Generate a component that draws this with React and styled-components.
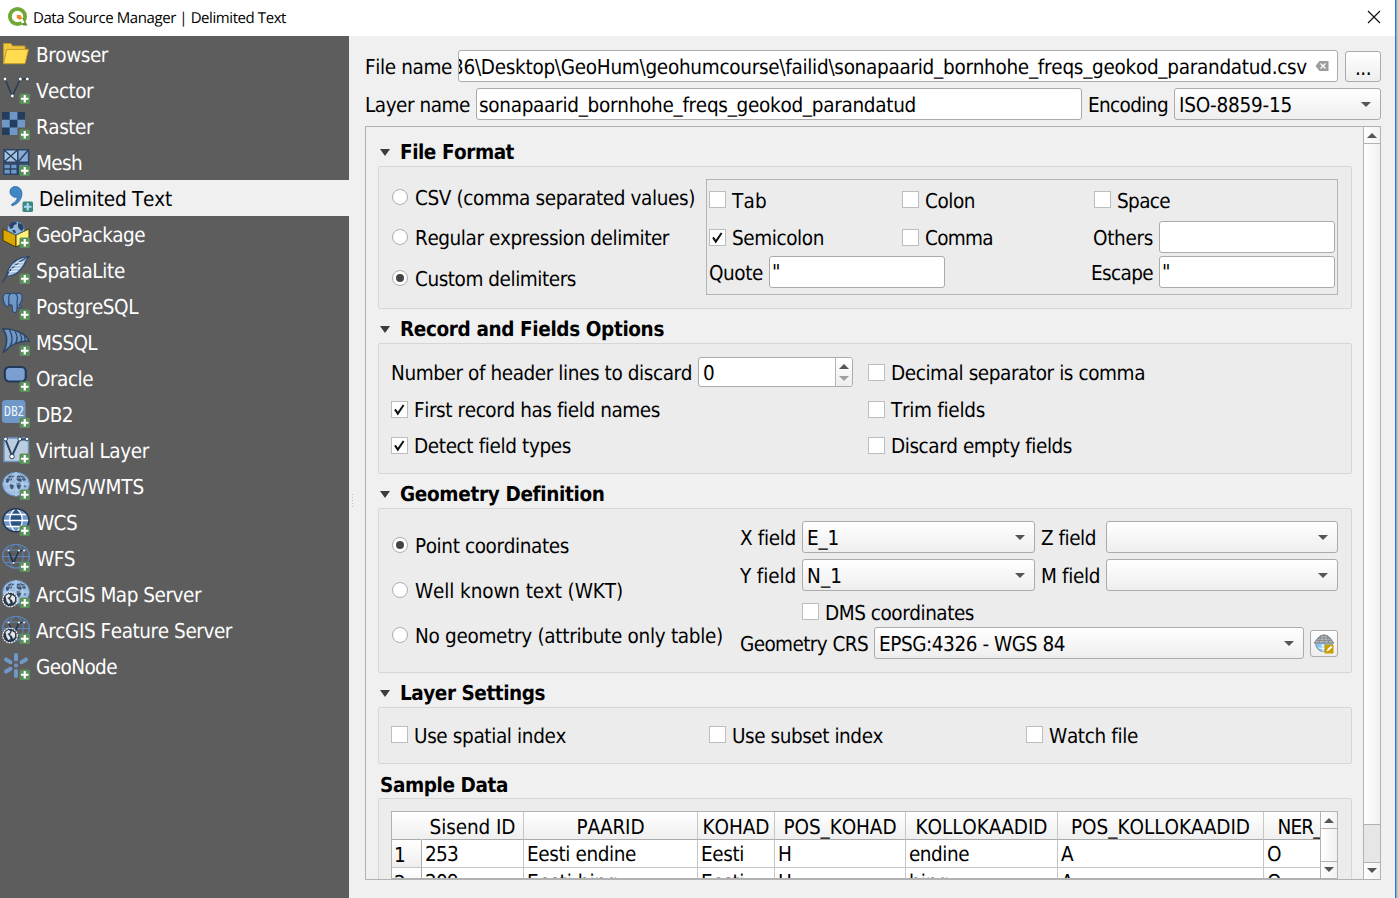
import React, { useLayoutEffect, useRef, useState } from "react";
import styled, { createGlobalStyle } from "styled-components";

const Global = createGlobalStyle`
  * { box-sizing: border-box; }
  html, body, #root { height: 100%; margin: 0; }
  body {
    overflow: hidden;
    background: #f0f0f0;
    color: #000;
    font-family: "DejaVu Sans Condensed", "DejaVu Sans", sans-serif;
    font-stretch: condensed;
    font-size: 20.5px;
    line-height: 24px;
    text-rendering: geometricPrecision;
    font-kerning: none;
  }
`;

/* ---------- text ---------- */
const TextSpan = styled.span`
  display: block;
  flex: none;
  white-space: pre;
  width: ${(p) => p.$w}px;
  font-weight: ${(p) => (p.$bold ? 700 : 400)};
  margin-top: ${(p) => p.$drop ?? 1}px;
`;

/* Label whose tracking is tuned so that it spans a given width. */
function Label({ w, bold, drop, children }) {
  const ref = useRef(null);
  const [spacing, setSpacing] = useState(0);
  useLayoutEffect(() => {
    const range = document.createRange();
    range.selectNodeContents(ref.current);
    const natural = range.getBoundingClientRect().width;
    setSpacing((w - natural) / String(children).length);
  }, [w, children]);
  return (
    <TextSpan ref={ref} $w={w} $bold={bold} $drop={drop} style={{ letterSpacing: spacing }}>
      {children}
    </TextSpan>
  );
}

/* ---------- window ---------- */
const Window = styled.div`
  display: flex;
  width: 1399px;
  height: 898px;
  overflow: hidden;
`;
const Main = styled.div`
  width: 1395px;
  display: flex;
  flex-direction: column;
`;
const Backdrop = styled.div`
  width: 4px;
  border-left: 1px solid #1a7fd4;
  background: linear-gradient(90deg, #a9a9a9 0 1px, #c4c4c4 1px 2px, #d2d2d2 2px);
`;
const TitleBar = styled.header`
  height: 36px;
  background: #fff;
  display: flex;
  align-items: center;
  padding: 0 14px 2px 7px;
  font: 15px "Open Sans", "Noto Sans", sans-serif;
  & > svg:last-child { margin-left: auto; }
`;
const TitleText = styled.div`
  margin: 1px 0 0 5px;
`;
const Body = styled.div`
  display: flex;
  flex: 1;
  min-height: 0;
`;

/* ---------- side bar ---------- */
const Sidebar = styled.nav`
  width: 349px;
  background: #5d5d5d;
`;
const NavItem = styled.div`
  height: 36px;
  display: flex;
  align-items: center;
  gap: 6px;
  padding-left: ${(p) => (p.$active ? 5 : 2)}px;
  background: ${(p) => (p.$active ? "#f0f0f0" : "transparent")};
  color: ${(p) => (p.$active ? "#000" : "#fff")};
`;
const NavIcon = styled.svg`
  width: 28px;
  height: 28px;
  flex: none;
`;
const Splitter = styled.div`
  width: 8px;
  display: flex;
  align-items: center;
  padding: 68px 0 0 3px;
  &::before {
    content: "";
    width: 1px;
    height: 15px;
    background: repeating-linear-gradient(#bdbdbd 0 1px, transparent 1px 3px);
  }
`;

/* ---------- form controls ---------- */
const Content = styled.main`
  flex: 1;
  min-width: 0;
  padding: 14px 14px 18px 8px;
  display: flex;
  flex-direction: column;
  gap: 6px;
`;
const Row = styled.div`
  display: flex;
  flex: none;
  align-items: center;
  gap: ${(p) => p.$gap ?? 6}px;
  height: ${(p) => (p.$h ? p.$h + "px" : "auto")};
`;
const Field = styled.div`
  height: 32px;
  width: ${(p) => (p.$w ? p.$w + "px" : "auto")};
  flex: ${(p) => (p.$w ? "none" : 1)};
  display: flex;
  align-items: center;
  padding-left: 2px;
  background: #fff;
  border: 1px solid #ababab;
  border-radius: 3px;
`;
const ClipEnd = styled.div`
  flex: 1;
  min-width: 0;
  margin-left: -2px;
  overflow: hidden;
  display: flex;
  justify-content: flex-end;
`;
const Combo = styled(Field)`
  padding: 0 9px 0 4px;
  justify-content: space-between;
  background: linear-gradient(#fff, #eee);
`;
const PushButton = styled.button`
  width: ${(p) => p.$w}px;
  height: ${(p) => p.$h}px;
  padding: 0;
  display: flex;
  align-items: center;
  justify-content: center;
  font: inherit;
  font-stretch: condensed;
  color: #000;
  background: linear-gradient(#fff, #eee);
  border: 1px solid #ababab;
  border-radius: 3px;
`;
const CheckBox = styled.span`
  width: 17px;
  height: 17px;
  flex: none;
  display: flex;
  align-items: center;
  justify-content: center;
  background: #fff;
  border: 1px solid #bdbdbd;
`;
const RadioDot = styled.span`
  width: 16px;
  height: 16px;
  flex: none;
  display: flex;
  align-items: center;
  justify-content: center;
  background: #fff;
  border: 1px solid #adadad;
  border-radius: 50%;
  &::before {
    content: "";
    width: 8px;
    height: 8px;
    border-radius: 50%;
    background: ${(p) => (p.$on ? "#444" : "transparent")};
  }
`;
const SpinButtons = styled.div`
  width: 17px;
  height: 28px;
  margin-left: auto;
  border-left: 1px solid #b5b5b5;
  background: linear-gradient(#fff, #eee);
  border-radius: 0 2px 2px 0;
  display: flex;
  flex-direction: column;
  align-items: center;
  justify-content: center;
  gap: 7px;
`;
const Triangle = styled.i`
  width: 0;
  height: 0;
  flex: none;
  border: 0 solid transparent;
  border-width: 0 ${(p) => p.$s ?? 5}px;
  border-${(p) => (p.$up ? "bottom" : "top")}: ${(p) => p.$t ?? 5}px solid ${(p) => p.$c ?? "#555"};
`;

/* ---------- scroll area ---------- */
const ScrollArea = styled.div`
  flex: 1;
  min-height: 0;
  display: flex;
  border: 1px solid #b2b2b2;
`;
const Viewport = styled.div`
  flex: 1;
  min-width: 0;
  overflow: hidden;
  padding: 11px 11px 0 12px;
`;
const ScrollBar = styled.div`
  width: ${(p) => p.$w}px;
  flex: none;
  border-left: 1px solid #b2b2b2;
  background: #e6e6e6;
  display: flex;
  flex-direction: column;
`;
const ScrollButton = styled.div`
  height: 16px;
  display: flex;
  align-items: center;
  justify-content: center;
  background: linear-gradient(90deg, #fff, #f2f2f2);
`;
const Thumb = styled.div`
  height: ${(p) => p.$h}px;
  margin-bottom: ${(p) => p.$after ?? 0}px;
  border-top: 1px solid #b2b2b2;
  border-bottom: 1px solid #b2b2b2;
  background: linear-gradient(90deg, #fff, #f0f0f0);
`;
const ScrollEnd = styled(ScrollButton)`
  flex: 1;
  padding-bottom: 1px;
  border-top: ${(p) => (p.$line ? "1px solid #b2b2b2" : "0")};
`;

/* ---------- group boxes ---------- */
const GroupTitle = styled.div`
  height: 28px;
  display: flex;
  align-items: center;
  padding-left: 2px;
  gap: 10px;
`;
const GroupBox = styled.section`
  height: ${(p) => p.$h}px;
  margin-bottom: 6px;
  background: #ececec;
  border: 1px solid #d6d6d6;
  border-radius: 2px;
  display: flex;
  padding: ${(p) => p.$pad};
`;
const Column = styled.div`
  width: ${(p) => p.$w}px;
  flex: none;
`;
const GroupRadios = styled.div`
  padding: 10px 0 0 13px;
`;
const DelimiterFrame = styled.div`
  width: 632px;
  height: 116px;
  margin-top: 12px;
  border: 1px solid #b4b4b4;
  display: grid;
  grid-template-columns: 193px 186px 247px;
  grid-template-rows: 39px 36px 34px;
  align-items: center;
  padding-left: 2px;
`;
const EndCell = styled.div`
  display: flex;
  align-items: center;
  justify-content: flex-end;
  gap: 6px;
`;
const SpaceCell = styled.div`
  padding-left: 6px;
`;
const SpinField = styled(Field)`
  height: 30px;
  padding-left: 4px;
`;
const DmsRow = styled.div`
  height: 30px;
  display: flex;
  align-items: center;
  padding: 0 0 1px 62px;
`;
const Rows = styled.div`
  display: flex;
  flex-direction: column;
`;
const SettingCell = styled.div`
  width: ${(p) => p.$w}px;
  display: flex;
  align-items: center;
`;

/* ---------- sample table ---------- */
const TableFrame = styled.div`
  width: 947px;
  height: 68px;
  border: 1px solid #b2b2b2;
  display: flex;
  background: #fff;
`;
const Table = styled.div`
  flex: 1;
  min-width: 0;
  height: 66px;
  overflow: hidden;
  display: grid;
  grid-template-columns: 30px 102px 174px 77px 131px 152px 206px 72px;
  grid-template-rows: 28px 28px 28px;
`;
const HeadCell = styled.div`
  display: flex;
  align-items: center;
  justify-content: center;
  background: linear-gradient(#fff, #efefef);
  border-right: 1px solid ${(p) => (p.$plain ? "transparent" : "#c6c6c6")};
  border-bottom: 1px solid #ababab;
`;
const RowHead = styled.div`
  display: flex;
  align-items: center;
  padding-left: 2px;
  background: linear-gradient(#fff, #efefef);
  border-right: 1px solid #ababab;
  border-bottom: 1px solid #c6c6c6;
`;
const Cell = styled.div`
  display: flex;
  align-items: center;
  padding-left: 3px;
  border-right: 1px solid #c6c6c6;
  border-bottom: 1px solid #c6c6c6;
`;

/* ---------- composed controls ---------- */
const Check = ({ on, w, children }) => (
  <Row $gap={6}>
    <CheckBox>
      {on && (
        <svg width="15" height="15" viewBox="0 0 15 15">
          <path d="M3 7.4 L5.8 11.6 L11.6 3" fill="none" stroke="#111" strokeWidth="2" />
        </svg>
      )}
    </CheckBox>
    <Label w={w} drop={2}>{children}</Label>
  </Row>
);
const Radio = ({ on, w, h, drop = 1, children }) => (
  <Row $gap={7} $h={h}>
    <RadioDot $on={on} />
    <Label w={w} drop={drop}>{children}</Label>
  </Row>
);
const Select = ({ w, text, textWidth }) => (
  <Combo $w={w}>
    {text ? <Label w={textWidth}>{text}</Label> : <span />}
    <Triangle />
  </Combo>
);
const Title = ({ w, children }) => (
  <GroupTitle>
    <Triangle $s={5.5} $t={7} $c="#3c3c3c" />
    <Label w={w} bold drop={-1}>{children}</Label>
  </GroupTitle>
);

/* ---------- icons ---------- */
const N = "#2b4464";
const B = "#6f98c8";
const Plus = ({ fill = "#5a8f5b", stroke = "#fff" }) => (
  <g>
    <rect x="17.5" y="17.5" width="10.5" height="10.5" rx="1.5" fill={fill} />
    <path d="M22.75 19v7.5M19 22.75h7.5" stroke={stroke} strokeWidth="2.2" />
  </g>
);
const Continents = () => (
  <path
    d="M4 7l3-3 4-1 1 2-2 1 0 2-3 1-1 2-2-1zM7 12l3 0 2 2-2 4-2-2zM15 4l3-1 5 2 1 3-2 1-2-1-1 2-3-1-2-2zM14 11l4 0 1 3-2 4-2-3zM22 13l2 1-1 2z"
    fill={N}
    opacity=".85"
  />
);
const Globe = () => (
  <g>
    <ellipse cx="14" cy="12.2" rx="13.5" ry="12" fill="#9bbce0" stroke="#5d87bb" />
    <Continents />
    <path d="M1 12h26M3 6h22M3 18h22M14 0v24M14 0C5 7 5 17 14 24C23 17 23 7 14 0" fill="none" stroke="#c9dcf0" strokeWidth=".6" />
  </g>
);
const Wire = () => (
  <g fill="none">
    <ellipse cx="14" cy="12.2" rx="13.3" ry="11.8" stroke="#5c86bd" strokeWidth="1.3" />
    <path d="M1 12.5h26M3 6h22M3 18.5h18M12 .5C5 7 5 17 12 24M16 .5C23 7 23 17 16 24" stroke="#5c86bd" strokeWidth="1" />
    <path d="M6.5 6.5L11.5 19L17 6.5H22" stroke="#24364d" strokeWidth="1.7" />
    <g fill="#e8eef6">
      <circle cx="6.5" cy="6.5" r="1.1" /><circle cx="11.5" cy="19" r="1.1" />
      <circle cx="17" cy="6.5" r="1.1" /><circle cx="22" cy="6.5" r="1.1" />
    </g>
  </g>
);
const Arc = () => (
  <g>
    <circle cx="8" cy="19.5" r="7.2" fill="#26384d" stroke="#eee" strokeWidth="1.3" strokeDasharray="2 .7" />
    <path d="M3.5 16l3-2 2 1-1 2-2 1 2 2 1 3-2 1-2-3zM10 15l3 2 0 4-2 2-1-3-2-1z" fill="#e8e8e8" />
  </g>
);
const icons = {
  folder: (
    <g stroke="#c19a25" strokeWidth="1">
      <path d="M1.5 24V3.5h7.5l1.5 2.5h12.5v5" fill="#f0c63c" />
      <path d="M4.5 9.5l22-.2-3.5 14.4H1.5z" fill="#ffdc50" />
    </g>
  ),
  vector: (
    <g>
      <path d="M3 3L10.3 20L18.3 3H25.3" fill="none" stroke="#2c3e52" strokeWidth="1.6" />
      <g fill="#fff" stroke="#2c3e52" strokeWidth=".8">
        <circle cx="3" cy="3" r="1.9" /><circle cx="10.3" cy="20" r="1.9" />
        <circle cx="18.3" cy="3" r="1.9" /><circle cx="25.3" cy="3" r="1.9" />
      </g>
      <Plus />
    </g>
  ),
  raster: (
    <g>
      <path d="M0 0h23v15.4H15.4V23H0z" fill={B} />
      <path d="M0 0h7.7v7.7H0zM15.4 0H23v7.7h-7.6zM7.7 7.7h7.7v7.7H7.7zM0 15.4h7.7V23H0z" fill="#253d5d" />
      <Plus />
    </g>
  ),
  mesh: (
    <g>
      <g fill="#a6c3e3" stroke={N} strokeWidth="1.5">
        <path d="M1.8 1.8h14v12.4H1.8zM1.8 1.8l14 12.4M15.8 1.8L1.8 14.2" />
        <path d="M15.8 1.8h10.8v12.4H15.8z" fill="#86abd6" />
        <path d="M26.6 1.8L15.8 14.2" />
        <path d="M1.8 16h13.4v10.2H1.8zM1.8 21h13.4M8.5 16v10" fill={B} />
        <path d="M16.5 16h10v10.2h-10z" fill={B} />
      </g>
      <Plus />
    </g>
  ),
  comma: (
    <g>
      <path
        d="M5 7.2C5.2 4 8.1 2.3 10.8 2.6C15.2 3 17.7 7 16.7 11.8C15.6 17 12 20.5 7.5 21.6C6.4 21.8 6 20.6 7 20C10.2 18.2 12.2 16 12.5 13C9 14.3 4.7 11.3 5 7.2z"
        fill="#4187c6" stroke="#2c66a0" strokeWidth=".8"
      />
      <Plus fill="#3e8580" stroke="#a8dcf5" />
    </g>
  ),
  geopackage: (
    <g>
      <path d="M1 9l13 6v12L1 20.5z" fill="#dba800" stroke="#4a3a00" />
      <path d="M14 15l13-6v11l-13 7z" fill="#fff27a" stroke="#4a3a00" />
      <path d="M5 10.5A9 9 0 1 1 23 10.5L14 15z" fill="#93b6db" stroke="#47698f" />
      <path d="M7 5l3-3 4 0 1 2-3 1-1 3-3 1zM16 3l4 1 2 4-2 3-2-1-2-3zM10 10l3 0 1 3-2 0z" fill={N} />
      <Plus />
    </g>
  ),
  feather: (
    <g>
      <path d="M27 .5C18 1 11 5 7 12C5.5 15 5 18 4.5 20.5C12 20 18 16 22 9C23 6 25 3 27 .5z" fill="#a3c2e4" stroke={N} strokeWidth="1.2" />
      <path d="M0 27L5.5 18C10 11 18 5 27 .5" fill="none" stroke={N} strokeWidth="1.3" />
      <path d="M7 16l9-1M9 13l9-1M11 10l9-1M14 7l8-1" stroke="#e8f0f8" strokeWidth="1" />
      <Plus />
    </g>
  ),
  elephant: (
    <g>
      <g fill={B} stroke="#2d4d74" strokeWidth="1.2" strokeLinejoin="round">
        <path d="M4 1.5C1 2 .5 5 1.5 9C2.2 12 4 15 5.5 14.5C6.5 14 7 13 7 12L8 2C6.500 1.2 5 1.2 4 1.5z" />
        <path d="M14 1.5C17 .5 20 1.5 20.2 4.5C20.3 8 18.5 11.5 17 13.5L20 14.5C19 16 16.5 16 15.5 15L14 10z" />
        <path d="M7.5 2.5C9.500 .5 13 .8 14.8 2.8C16 5 15.5 8 15 10C15 13 15.5 17 14.5 19.5C13.5 21.2 10.8 21 10.5 18.5L10 13C7.5 13.5 6.5 12 7 10C6.5 7 6.5 4.5 7.5 2.5z" />
      </g>
      <Plus />
    </g>
  ),
  mssql: (
    <g>
      <path d="M.8 .8C12 1 24 5 27 13C18 12.5 8 17 .8 25C6 16 6 8 .8 .8z" fill={B} stroke={N} strokeWidth="1.5" />
      <path d="M7.500 2C11 8 10.5 14 8 18.5M13 3.5C16 8 15.5 12 13.5 16M18 5.5C20 8.5 20 11 18.8 14M22.5 8c1 2 1 3 .5 5" fill="none" stroke={N} strokeWidth="1.3" />
      <Plus />
    </g>
  ),
  oracle: (
    <g>
      <rect x="2.800" y="3" width="21" height="14.500" rx="4.500" fill="#7b9fd0" stroke="#22395a" strokeWidth="2.200" />
      <Plus />
    </g>
  ),
  db2: (
    <g>
      <rect x="0" y="0" width="23.500" height="23" rx="3.500" fill={B} />
      <text x="11.700" y="16.2" fontSize="14" textLength="20" lengthAdjust="spacingAndGlyphs" textAnchor="middle" fill="#f2f6fa" fontFamily="Open Sans">DB2</text>
      <Plus />
    </g>
  ),
  virtual: (
    <g>
      <rect x="2" y="2" width="24.500" height="23.500" fill="#bccde0" stroke="#6d94c0" strokeWidth="1.500" />
      <path d="M3.500 3.500L10 20L17.500 3.500H25" fill="none" stroke={N} strokeWidth="2" />
      <g fill="#fff" stroke={N} strokeWidth="1">
        <circle cx="3.500" cy="3" r="1.900" /><circle cx="10" cy="20.500" r="2.300" />
        <circle cx="17.800" cy="3" r="1.900" /><circle cx="25" cy="3" r="1.900" />
      </g>
      <Plus />
    </g>
  ),
  wms: <g><Globe /><Plus /></g>,
  wcs: (
    <g>
      <ellipse cx="14" cy="12.200" rx="13" ry="11.500" fill={B} />
      <path d="M8.500 6.500h11l1 6h-13zM7.500 12.500h13l-1 6h-11z" fill="#2d5283" />
      <path d="M9.500 6C10 3 12 1 14 1C16 1 18 3 18.500 6z" fill="#2d5283" />
      <path d="M1 12.500h26M3 6.500h22M3 18.500h22M13 1C6 7 6 17 13 23.500M15 1C22 7 22 17 15 23.500" fill="none" stroke="#fff" strokeWidth="1.300" />
      <ellipse cx="14" cy="12.200" rx="13" ry="11.500" fill="none" stroke="#22395a" strokeWidth="1.600" />
      <Plus />
    </g>
  ),
  wfs: <g><Wire /><Plus /></g>,
  arcMap: <g><Globe /><Arc /><Plus /></g>,
  arcFeature: <g><Wire /><Arc /><Plus /></g>,
  geonode: (
    <g>
      <g stroke={B} strokeWidth="4" strokeLinecap="round">
        <path d="M14 3v4.500M14 19v5M4 7.500l4.500 2.700M24 7.500l-4.500 2.700M4 19.500l4.500-2.700" />
      </g>
      <circle cx="14" cy="13.500" r="2" fill={B} />
      <Plus />
    </g>
  ),
};

const sources = [
  ["Browser", "folder", 72],
  ["Vector", "vector", 57],
  ["Raster", "raster", 57],
  ["Mesh", "mesh", 46],
  ["Delimited Text", "comma", 133],
  ["GeoPackage", "geopackage", 109],
  ["SpatiaLite", "feather", 89],
  ["PostgreSQL", "elephant", 102],
  ["MSSQL", "mssql", 61],
  ["Oracle", "oracle", 57],
  ["DB2", "db2", 37],
  ["Virtual Layer", "virtual", 113],
  ["WMS/WMTS", "wms", 108],
  ["WCS", "wcs", 41],
  ["WFS", "wfs", 39],
  ["ArcGIS Map Server", "arcMap", 165],
  ["ArcGIS Feature Server", "arcFeature", 196],
  ["GeoNode", "geonode", 81],
];

const columns = [
  ["Sisend ID", 86], ["PAARID", 68], ["KOHAD", 67], ["POS_KOHAD", 113],
  ["KOLLOKAADID", 132], ["POS_KOLLOKAADID", 179], ["NER_", 44],
];
const samples = [
  [["1", 11], ["253", 33], ["Eesti endine", 109], ["Eesti", 43], ["H", 14], ["endine", 60], ["A", 12], ["O", 14]],
  [["2", 11], ["209", 33], ["Eesti hing", 91], ["Eesti", 43], ["H", 14], ["hing", 40], ["A", 12], ["O", 14]],
];

export default function App() {
  return (
    <Window>
      <Global />
      <Main>
        <TitleBar>
          <svg width="21" height="20" viewBox="0 0 21 20">
            <circle cx="10.500" cy="9.500" r="7.600" fill="none" stroke="#6fa832" strokeWidth="3.800" />
            <path d="M12 11l4.500 0L20.500 18.500h-4.500z" fill="#5b9a2b" />
            <path d="M9.500 8h4l4 7.500-2.500 1z" fill="#fff" />
            <path d="M9.800 8h3.700l1.800 3.500-2.600 1.200-3-1.700z" fill="#f0862b" />
          </svg>
          <TitleText><Label w={253} drop={0}>Data Source Manager | Delimited Text</Label></TitleText>
          <svg width="14" height="14" viewBox="0 0 14 14">
            <path d="M1 1l12 12M13 1L1 13" stroke="#111" strokeWidth="1.200" />
          </svg>
        </TitleBar>
        <Body>
          <Sidebar>
            {sources.map(([name, icon, w]) => (
              <NavItem key={name} $active={icon === "comma"}>
                <NavIcon viewBox="0 0 28 28">{icons[icon]}</NavIcon>
                <Label w={w}>{name}</Label>
              </NavItem>
            ))}
          </Sidebar>
          <Splitter />
          <Content>
            <Row $h={32} $gap={7}>
              <Row $gap={6}>
                <Label w={87}>File name</Label>
                <Field $w={880}>
                  <ClipEnd><Label w={855}>36\Desktop\GeoHum\geohumcourse\failid\sonapaarid_bornhohe_freqs_geokod_parandatud.csv</Label></ClipEnd>
                  <svg width="30" height="12" viewBox="1 0 30 12">
                    <path d="M9.500 6L13.500 1H22.500V11H13.500z" fill="#9c9c9c" />
                    <path d="M14.500 3.500l5 5M19.500 3.500l-5 5" stroke="#fff" strokeWidth="1.300" />
                  </svg>
                </Field>
              </Row>
              <PushButton $w={36} $h={31}><Label w={16} drop={3}>...</Label></PushButton>
            </Row>
            <Row $h={32} $gap={6}>
              <Row>
                <Label w={105}>Layer name</Label>
                <Field $w={606}><Label w={437}>sonapaarid_bornhohe_freqs_geokod_parandatud</Label></Field>
                <Label w={80}>Encoding</Label>
              </Row>
              <Select w={207} text="ISO-8859-15" textWidth={113} />
            </Row>
            <ScrollArea>
              <Viewport>
                <Title w={114}>File Format</Title>
                <GroupBox $h={143} $pad="0">
                  <Column $w={327}>
                    <GroupRadios>
                      <Radio h={40} w={280}>CSV (comma separated values)</Radio>
                      <Radio h={40} w={254}>Regular expression delimiter</Radio>
                      <Radio h={42} w={161} on>Custom delimiters</Radio>
                    </GroupRadios>
                  </Column>
                  <DelimiterFrame>
                    <Check w={35}>Tab</Check>
                    <Check w={50}>Colon</Check>
                    <SpaceCell><Check w={53}>Space</Check></SpaceCell>
                    <Check w={92} on>Semicolon</Check>
                    <Check w={68}>Comma</Check>
                    <EndCell><Label w={60}>Others</Label><Field $w={176} /></EndCell>
                    <Row><Label w={54}>Quote</Label><Field $w={176}><Label w={8} drop={-1}>"</Label></Field></Row>
                    <span />
                    <EndCell><Label w={62}>Escape</Label><Field $w={176}><Label w={8} drop={-1}>"</Label></Field></EndCell>
                  </DelimiterFrame>
                </GroupBox>

                <Title w={264}>Record and Fields Options</Title>
                <GroupBox $h={131} $pad="9px 0 0 12px">
                  <Column $w={477}>
                    <Row $h={38} $gap={6}>
                      <Label w={301}>Number of header lines to discard</Label>
                      <SpinField $w={155}>
                        <Label w={12}>0</Label>
                        <SpinButtons><Triangle $up /><Triangle $c="#a0a0a0" /></SpinButtons>
                      </SpinField>
                    </Row>
                    <Row $h={36}><Check w={246} on>First record has field names</Check></Row>
                    <Row $h={36}><Check w={157} on>Detect field types</Check></Row>
                  </Column>
                  <Rows>
                    <Row $h={38}><Check w={254}>Decimal separator is comma</Check></Row>
                    <Row $h={36}><Check w={94}>Trim fields</Check></Row>
                    <Row $h={36}><Check w={181}>Discard empty fields</Check></Row>
                  </Rows>
                </GroupBox>

                <Title w={204}>Geometry Definition</Title>
                <GroupBox $h={165} $pad="12px 0 0 13px">
                  <Column $w={348}>
                    <Rows>
                      <Radio h={47} w={154} drop={2} on>Point coordinates</Radio>
                      <Radio h={44} w={208}>Well known text (WKT)</Radio>
                      <Radio h={46} w={308}>No geometry (attribute only table)</Radio>
                    </Rows>
                  </Column>
                  <Rows>
                    <Row>
                      <Label w={56}>X field</Label>
                      <Select w={233} text="E_1" textWidth={32} />
                      <ZLabel><Label w={55}>Z field</Label></ZLabel>
                      <Select w={232} />
                    </Row>
                    <Row $h={44}>
                      <Label w={56}>Y field</Label>
                      <Select w={233} text="N_1" textWidth={35} />
                      <Label w={59}>M field</Label>
                      <Select w={232} />
                    </Row>
                    <DmsRow><Check w={149}>DMS coordinates</Check></DmsRow>
                    <Row $h={32}>
                      <Label w={128}>Geometry CRS</Label>
                      <Select w={430} text="EPSG:4326 - WGS 84" textWidth={186} />
                      <PushButton $w={28} $h={27}>
                        <svg width="22" height="22" viewBox="0 0 22 22">
                          <circle cx="11" cy="11.500" r="8.300" fill="#8fc4ee" stroke="#6a91b3" />
                          <path d="M8 13l4 2M6 16l9 1M10 12v8" stroke="#fff" />
                          <path d="M1 11L7 4.500C9 2.500 13 2.500 15 4.500L21 11z" fill="#b4b8bb" stroke="#7c8185" />
                          <path d="M3.500 8.500h15M6 6h10M11 3v8M8 4L6 11M14 4l2 7" stroke="#7a7f84" strokeWidth=".7" />
                          <rect x="11.500" y="12.500" width="9" height="9" rx="1" fill="#c99f00" />
                          <path d="M13.500 19.500l1-2.500 3.500-3.200 1.400 1.400-3.500 3.400z" fill="#fff" />
                        </svg>
                      </PushButton>
                    </Row>
                  </Rows>
                </GroupBox>

                <Title w={145}>Layer Settings</Title>
                <GroupBox $h={57} $pad="0 0 2px 12px">
                  <SettingCell $w={318}><Check w={152}>Use spatial index</Check></SettingCell>
                  <SettingCell $w={317}><Check w={151}>Use subset index</Check></SettingCell>
                  <SettingCell $w={200}><Check w={89}>Watch file</Check></SettingCell>
                </GroupBox>

                <GroupTitle><Label w={128} bold drop={1}>Sample Data</Label></GroupTitle>
                <GroupBox $h={140} $pad="12px 0 0 12px">
                  <TableFrame>
                    <Table>
                      <HeadCell $plain />
                      {columns.map(([name, w]) => (
                        <HeadCell key={name}><Label w={w} drop={3}>{name}</Label></HeadCell>
                      ))}
                      {samples.map(([[num, nw], ...cells], i) => (
                        <React.Fragment key={i}>
                          <RowHead><Label w={nw} drop={3}>{num}</Label></RowHead>
                          {cells.map(([text, w], j) => (
                            <Cell key={j}><Label w={w} drop={1}>{text}</Label></Cell>
                          ))}
                        </React.Fragment>
                      ))}
                    </Table>
                    <ScrollBar $w={17}>
                      <ScrollButton><Triangle $up /></ScrollButton>
                      <Thumb $h={34} />
                      <ScrollEnd><Triangle /></ScrollEnd>
                    </ScrollBar>
                  </TableFrame>
                </GroupBox>
              </Viewport>
              <ScrollBar $w={17}>
                <ScrollButton><Triangle $up /></ScrollButton>
                <Thumb $h={682} $after={37} />
                <ScrollEnd $line><Triangle /></ScrollEnd>
              </ScrollBar>
            </ScrollArea>
          </Content>
        </Body>
      </Main>
      <Backdrop />
    </Window>
  );
}

/* Keeps the "Z field" label as wide as the "M field" label below it. */
const ZLabel = styled.div`
  width: 59px;
`;
